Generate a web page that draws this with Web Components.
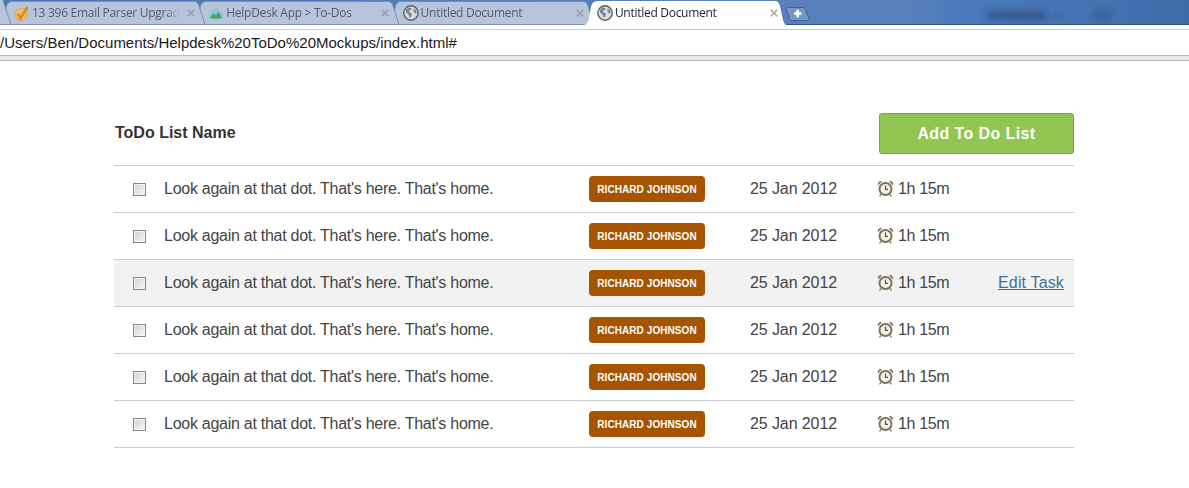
<!DOCTYPE html>
<html>
<head>
<meta charset="utf-8">
<title>Untitled Document</title>
<style>
  html, body { margin: 0; padding: 0; background: #fff; }
  body { font-family: "Liberation Sans", Arial, sans-serif; overflow: hidden; }
</style>
</head>
<body>
<browser-chrome url="/Users/Ben/Documents/Helpdesk%20ToDo%20Mockups/index.html#">
  <browser-tab icon="check" title="13 396 Email Parser Upgrade"></browser-tab>
  <browser-tab icon="cloud" title="HelpDesk App &gt; To-Dos"></browser-tab>
  <browser-tab icon="globe" title="Untitled Document"></browser-tab>
  <browser-tab icon="globe" title="Untitled Document" active></browser-tab>
</browser-chrome>
<todo-list name="ToDo List Name" action="Add To Do List">
  <todo-row></todo-row>
  <todo-row></todo-row>
  <todo-row hover></todo-row>
  <todo-row></todo-row>
  <todo-row></todo-row>
  <todo-row></todo-row>
</todo-list>

<script>
const ICONS = {
  check: `<svg viewBox="0 0 16 16" width="16" height="16">
    <circle cx="7" cy="9.500" r="6" fill="#efc06a" stroke="#dba544"/>
    <path d="M3.500 8.500l3 4.500 7-11" fill="none" stroke="#e08e28" stroke-width="3"/></svg>`,
  cloud: `<svg viewBox="0 0 16 16" width="16" height="16">
    <path d="M3.500 14.500C1.500 14.500 0 13 0 11 0 9.300 1.200 8 3 7.700 3.700 5 5.700 3.500 8 3.500c2.400 0 4.300 1.500 5 4.200 1.700.3 3 1.600 3 3.300 0 2-1.500 3.500-3.500 3.500z" fill="#86ccd8"/>
    <path d="M2.500 12.500L5.500 8.500 8 10.500 10.500 6.500 13.500 12.500 12 13.500H4z" fill="#4f9e5a"/></svg>`,
  globe: `<svg viewBox="0 0 16 16" width="16" height="16">
    <circle cx="8" cy="8" r="7.200" fill="#d8dbdf" stroke="#59616b" stroke-width="1.400"/>
    <path d="M3 5l2.500-2.500 3 .5-.5 2-2 .5.500 2 2.500 1-1 3.500-1.500.5-1-3-2.500-2zM10.500 4l2 .5 1.500 3-2 1-1.500-2z" fill="#7b838d"/></svg>`
};

class BrowserTab extends HTMLElement {
  constructor() {
    super();
    const shadowRoot = this.attachShadow({ mode: 'open' });
    const active = this.hasAttribute('active');
    const shape = active
      ? 'M-4 25C0 25 1 22 2 18L4 7C5 3 7 1 11 1H188C191 1 192 3 193 6L196 20C197 23 198 25 200 25Z'
      : 'M0 24.500L2 8C3 3 5 1.500 9 1.500H190C193 1.500 194 3 195 6L201 24.500Z';
    shadowRoot.innerHTML = `
    <style>
      :host {
        display: block;
        position: relative;
        width: 194.300px;
        height: 25px;
        flex: none;
      }
      .shape { position: absolute; left: -6px; top: 0; width: 214px; height: 25px; overflow: visible; }
      .content {
        position: relative;
        display: flex;
        align-items: center;
        width: 181px;
        height: 25px;
        padding-left: 10px;
        box-sizing: content-box;
        gap: 2px;
        font: 12px "Open Sans", "Noto Sans", sans-serif;
        letter-spacing: -0.28px;
        color: ${active ? '#1c2026' : '#525c6c'};
      }
      .icon { width: 16px; height: 16px; flex: none; }
      .title {
        flex: 1;
        min-width: 0;
        white-space: nowrap;
        overflow: hidden;
        -webkit-mask-image: linear-gradient(to right, #000 calc(100% - 14px), transparent);
        mask-image: linear-gradient(to right, #000 calc(100% - 14px), transparent);
      }
      .close { flex: none; width: 8px; height: 8px; margin-left: 5px; }
    </style>
    <svg class="shape" viewBox="-6 0 214 25">
      <path d="${shape}" fill="${active ? '#ffffff' : '#b6c5dc'}" stroke="${active ? 'none' : '#7f8fa8'}" stroke-width="1"/>
    </svg>
    <div class="content">
      <span class="icon">${ICONS[this.getAttribute('icon')]}</span>
      <span class="title">${this.getAttribute('title').replace(/>/g, '&gt;')}</span>
      <svg class="close" viewBox="0 0 8 8"><path d="M.7.7l6.600 6.600M7.300.7l-6.600 6.600" stroke="${active ? '#b0b4ba' : '#98a3b4'}" stroke-width="1.800"/></svg>
    </div>
    `;
  }
}
customElements.define('browser-tab', BrowserTab);

class BrowserChrome extends HTMLElement {
  constructor() {
    super();
    const shadowRoot = this.attachShadow({ mode: 'open' });
    shadowRoot.innerHTML = `
    <style>
      :host { display: block; }
      .strip {
        position: relative;
        height: 25px;
        display: flex;
        align-items: flex-start;
        background: linear-gradient(to right, #4a77b8 0, #5b81bb 900px, #4a78bb 970px, #4672b2 1100px, #3e6aa8 1189px);
        overflow: hidden;
      }
      .line { position: absolute; left: 0; right: 0; bottom: 0; height: 1px; background: #2f5687; }
      .stub { flex: none; width: 4px; height: 25px; position: relative; z-index: 6; overflow: visible; }
      ::slotted(browser-tab) { z-index: 1; }
      ::slotted(browser-tab:nth-child(1)) { z-index: 3; }
      ::slotted(browser-tab:nth-child(2)) { z-index: 2; }
      ::slotted(browser-tab[active]) { z-index: 5; }
      .plus { flex: none; margin: 7px 0 0 5px; width: 24px; height: 14px; position: relative; z-index: 6; }
      .blur { position: absolute; background: #35598f; filter: blur(3px); }
      .b1 { left: 987px; top: 11px; width: 60px; height: 9px; }
      .b2 { left: 1093px; top: 9px; width: 18px; height: 12px; opacity: .6; }
      .b3 { left: 1056px; top: 13px; width: 8px; height: 5px; opacity: .6; }
      .gap { height: 4px; background: #fff; }
      .url {
        height: 27px;
        box-sizing: border-box;
        border-top: 1px solid #c9c9c9;
        border-bottom: 1px solid #bdbdbd;
        background: #fff;
        font: 15px/25px "Liberation Sans", Arial, sans-serif;
        color: #1a1a1a;
        white-space: nowrap;
      }
      .rule {
        height: 5px;
        box-sizing: border-box;
        background: #e9e9e9;
        border-bottom: 1px solid #b9b9b9;
      }
    </style>
    <div class="strip">
      <span class="blur b1"></span><span class="blur b2"></span><span class="blur b3"></span>
      <span class="line"></span>
      <svg class="stub" viewBox="0 0 4 25">
        <path d="M-12 -1H2.500L11 24.500H-12Z" fill="#b6c5dc" stroke="#7f8fa8"/>
      </svg>
      <slot></slot>
      <svg class="plus" viewBox="0 0 24 14">
        <path d="M1.500.500H17C18.500.500 19 1.500 19.500 2.500L23 11.500C23.500 13 23 13.500 21.500 13.500H6C4.500 13.500 4 12.500 3.500 11.500L.5 2.500C0 1 .5 .5 1.500 .5Z" fill="#7596c9" stroke="#3d6299"/>
        <path d="M8 6.500h7.500M11.700 2.800v7.500" stroke="#fff" stroke-width="2.600"/>
      </svg>
    </div>
    <div class="gap"></div>
    <div class="url">${this.getAttribute('url')}</div>
    <div class="rule"></div>
    `;
  }
}
customElements.define('browser-chrome', BrowserChrome);

class TodoList extends HTMLElement {
  constructor() {
    super();
    const shadowRoot = this.attachShadow({ mode: 'open' });
    shadowRoot.innerHTML = `
    <style>
      :host {
        display: block;
        width: 960px;
        margin: 0 0 0 114px;
        padding-top: 52px;
        color: #333;
      }
      .head {
        display: flex;
        justify-content: space-between;
        align-items: center;
        padding: 0 0 11px 1px;
      }
      h1 { margin: 0 0 2px; font: bold 16px "Liberation Sans", Arial, sans-serif; color: #333; }
      button {
        width: 195px;
        height: 41px;
        box-sizing: border-box;
        background: #90c651;
        border: 1px solid #74a63c;
        border-radius: 3px;
        color: #fff;
        font: bold 16px "Liberation Sans", Arial, sans-serif;
        letter-spacing: 0.4px;
        padding: 0;
      }
      .rows { border-top: 1px solid #ccc; }
    </style>
    <div class="head">
      <h1>${this.getAttribute('name')}</h1>
      <button>${this.getAttribute('action')}</button>
    </div>
    <div class="rows"><slot></slot></div>
    `;
  }
}
customElements.define('todo-list', TodoList);

class TodoRow extends HTMLElement {
  constructor() {
    super();
    const shadowRoot = this.attachShadow({ mode: 'open' });
    shadowRoot.innerHTML = `
    <style>
      :host {
        display: grid;
        grid-template-columns: 50px 425px 161px 127px 1fr auto;
        align-items: center;
        height: 47px;
        box-sizing: border-box;
        border-bottom: 1px solid #ccc;
        font: 16px "Liberation Sans", Arial, sans-serif;
        color: #444;
      }
      :host([hover]) { background: #f2f2f2; }
      .box {
        width: 13px;
        height: 13px;
        box-sizing: border-box;
        margin: 1px 0 0 19px;
        border: 1px solid #868686;
        background: linear-gradient(135deg, #cfd0d3, #f8f8f8);
        box-shadow: inset 0 0 0 1px #f3f3f3;
      }
      .task { letter-spacing: -0.27px; margin-top: -1px; }
      .date { letter-spacing: -0.1px; margin-top: -1px; }
      .badge {
        justify-self: start;
        width: 116px;
        height: 26px;
        box-sizing: border-box;
        display: flex;
        align-items: center;
        justify-content: center;
        background: #a65400;
        border-radius: 4px;
        color: #fff;
        font: bold 10px "Liberation Sans", Arial, sans-serif;
        letter-spacing: 0.07px;
      }
      .time { display: flex; align-items: center; gap: 4px; margin-top: -1px; letter-spacing: -0.35px; }
      .edit { padding-right: 10px; color: #3f6f95; text-decoration: underline; margin-top: -1px; letter-spacing: 0.15px; }
    </style>
    <div class="box"></div>
    <div class="task">Look again at that dot. That's here. That's home.</div>
    <div class="badge">RICHARD JOHNSON</div>
    <div class="date">25 Jan 2012</div>
    <div class="time">
      <svg width="17" height="17" viewBox="0 0 17 17">
        <path d="M1 5.500L5 1.500 3 .8 .8 3zM16 5.500L12 1.500 14 .8 16.200 3z" fill="#857967"/>
        <circle cx="8.500" cy="9" r="6" fill="#f6f2e9" stroke="#7d7260" stroke-width="2"/>
        <path d="M8.500 5.500V9.300H11" fill="none" stroke="#5b5040" stroke-width="1.200"/>
        <path d="M4 14.500l-1.500 1.800M13 14.500l1.500 1.800" stroke="#7d7260" stroke-width="1.300"/>
      </svg>
      <span>1h 15m</span>
    </div>
    ${this.hasAttribute('hover') ? '<div class="edit">Edit Task</div>' : '<div></div>'}
    `;
  }
}
customElements.define('todo-row', TodoRow);
</script>
</body>
</html>
